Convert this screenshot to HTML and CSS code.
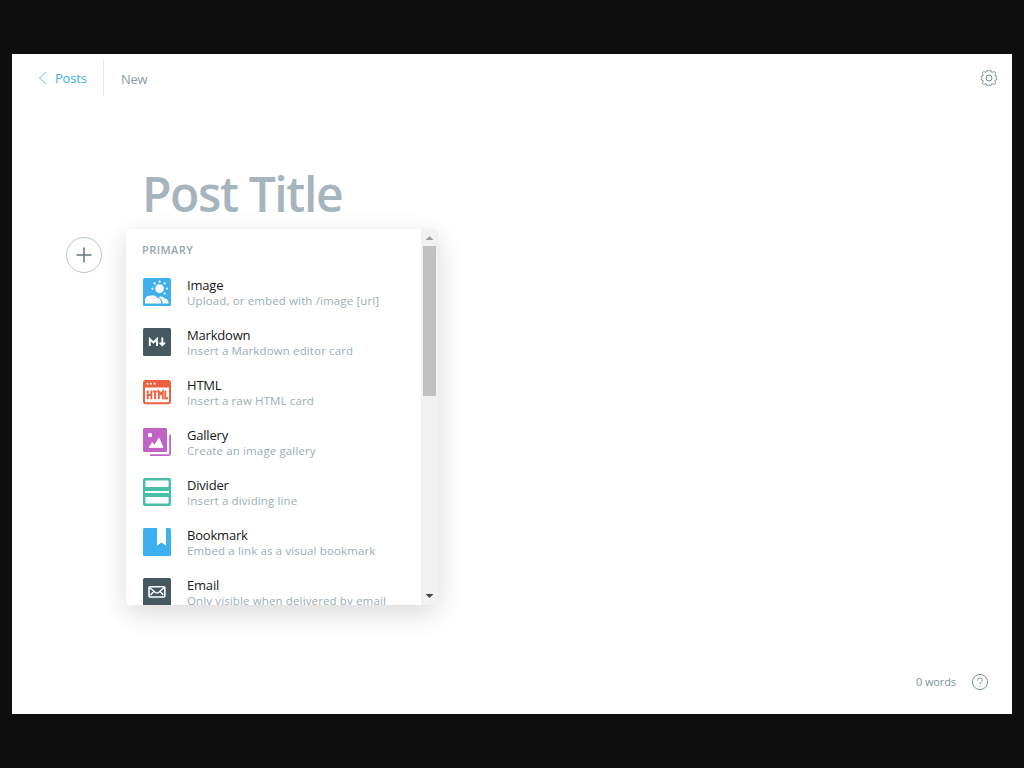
FILE: index.html
```html
<!DOCTYPE html>
<html lang="en">
<head>
<meta charset="utf-8">
<title>New post</title>
<link rel="stylesheet" href="styles.css">
</head>
<body>
<div class="app">
  <header class="topbar">
    <a class="back"><svg class="chevron" width="9" height="14" viewBox="0 0 9 14"><path d="M8 1L1.5 7L8 13"/></svg><span class="back-label">Posts</span></a>
    <span class="status">New</span>
    <svg class="gear" width="18" height="18" viewBox="0 0 18 18"><circle cx="9" cy="9" r="3"/><path d="M6.5 3.1C7.1 2.5 6.7 1.4 7.4 1.1C8.1 .8 8.3 2.3 9 2.3S9.9 .8 10.6 1.1C11.3 1.4 10.9 2.5 11.5 3.1C12.7 3.7 13.7 2.3 14.5 2.7L15.5 3.7C15.9 4.5 14.3 5.3 14.9 6.5C15.5 7.1 16.6 6.7 16.9 7.4C17.2 8.1 15.7 8.3 15.7 9S17.2 9.9 16.9 10.6C16.6 11.3 15.5 10.9 14.9 11.5C14.3 12.7 15.9 13.5 15.5 14.3L14.5 15.3C13.7 15.7 12.7 14.3 11.5 14.9C10.9 15.5 11.3 16.6 10.6 16.9C9.9 17.2 9.7 15.7 9 15.7S8.1 17.2 7.4 16.9C6.7 16.6 7.1 15.5 6.5 14.9C5.3 14.3 4.3 15.7 3.5 15.3L2.5 14.3C2.1 13.5 3.7 12.7 3.1 11.5C2.5 10.9 1.4 11.3 1.1 10.6C.8 9.9 2.3 9.7 2.3 9S.8 8.1 1.1 7.4C1.4 6.7 2.5 7.1 3.1 6.5C3.7 5.3 2.1 4.5 2.5 3.7L3.5 2.7C4.3 2.3 5.3 3.7 6.5 3.1Z"/></svg>
  </header>
  <h1 class="post-title">Post Title</h1>
  <main class="editor">
    <button class="plus" aria-label="Add a card"><svg width="16" height="16" viewBox="0 0 16 16"><path d="M8 .5V15.5M.5 8H15.5"/></svg></button>
    <section class="menu">
      <div class="cards">
        <h2 class="heading">Primary</h2>
        <div class="card">
          <svg class="icon" viewBox="0 0 28 28"><rect width="28" height="28" rx="1.5" fill="#3eb0ef"/><circle cx="16.6" cy="10.6" r="4.3" fill="#fff"/><g fill="#fff"><circle cx="16.6" cy="3.6" r="1.1"/><circle cx="11.6" cy="5.4" r="1.1"/><circle cx="21.7" cy="5.4" r="1.1"/><circle cx="9.4" cy="10.6" r="1.1"/><circle cx="24" cy="10.6" r="1.1"/><circle cx="21.7" cy="15.5" r="1.1"/><path d="M2 25.5V22C2 19.3 4.3 17.6 7 17.8C10 16.5 13 17.6 14.3 20C17 20 18.3 22.5 18.3 25.5ZM15.5 19.4C17.5 17.6 20.5 18.5 21.3 20.6C24.2 20.6 25.7 22.7 25.6 25.5H19.8C19.6 22.4 18.2 20.2 15.5 19.4Z"/></g></svg>
          <div class="copy"><span class="name">Image</span><span class="desc">Upload, or embed with /image [url]</span></div>
        </div>
        <div class="card">
          <svg class="icon" viewBox="0 0 28 28"><rect width="28" height="28" rx="1.5" fill="#465961"/><path d="M6.8 18V11L10.4 14.5L14 11V18M19.3 9.5V17.2M16.6 14.6L19.3 17.2L22 14.6" fill="none" stroke="#fff" stroke-width="1.9"/></svg>
          <div class="copy"><span class="name">Markdown</span><span class="desc">Insert a Markdown editor card</span></div>
        </div>
        <div class="card">
          <svg class="icon" viewBox="0 0 28 28"><rect y="2" width="28" height="24.2" rx="2.6" fill="#ed6040"/><path d="M2 9.5H26V23.3Q26 24.3 25 24.3H3Q2 24.3 2 23.3Z" fill="#fff"/><g fill="#fff"><circle cx="4.5" cy="5.8" r="1"/><circle cx="8" cy="5.8" r="1"/><circle cx="11.6" cy="5.8" r="1"/></g><path d="M4.7 12.6V21.2M8.4 12.6V21.2M4.7 17H8.4M9.9 13.5H14.3M12.1 13.5V21.2M15.8 21.2V13.6L17.8 16.2L19.8 13.6V21.2M22.3 12.6V20.3H25" fill="none" stroke="#ed6040" stroke-width="1.9"/></svg>
          <div class="copy"><span class="name">HTML</span><span class="desc">Insert a raw HTML card</span></div>
        </div>
        <div class="card">
          <svg class="icon" viewBox="0 0 28 28"><rect width="24" height="24" rx="1.5" fill="#c063c5"/><path d="M27.1 6.7V25.6Q27.1 27.1 25.6 27.1H7" fill="none" stroke="#c063c5" stroke-width="1.8"/><circle cx="7" cy="7" r="2.2" fill="#fff"/><path d="M6 19.5L9.3 14.5L11.8 17L16 10L20 19.5Z" fill="#fff" stroke="#fff" stroke-width=".8" stroke-linejoin="round"/></svg>
          <div class="copy"><span class="name">Gallery</span><span class="desc">Create an image gallery</span></div>
        </div>
        <div class="card">
          <svg class="icon" viewBox="0 0 28 28"><rect width="28" height="28" rx="1.7" fill="#48bfa8"/><g fill="#fff"><rect x="2.4" y="2.4" width="23.2" height="6.6" rx=".8"/><rect x="2" y="13" width="24" height="2"/><rect x="2.4" y="19" width="23.2" height="6.6" rx=".8"/></g></svg>
          <div class="copy"><span class="name">Divider</span><span class="desc">Insert a dividing line</span></div>
        </div>
        <div class="card">
          <svg class="icon" viewBox="0 0 28 28"><rect width="28" height="28" rx="1.5" fill="#3eb0ef"/><path d="M14 0H23V17.6L18.5 14.6L14 17.6Z" fill="#fff"/></svg>
          <div class="copy"><span class="name">Bookmark</span><span class="desc">Embed a link as a visual bookmark</span></div>
        </div>
        <div class="card">
          <svg class="icon" viewBox="0 0 28 28"><rect width="28" height="28" rx="1.5" fill="#465961"/><rect x="6" y="8.8" width="15.8" height="10.2" rx="1" fill="none" stroke="#fff" stroke-width="1.6"/><path d="M6.8 9.8L12.2 14.2Q14 15.6 15.8 14.2L21 9.8M7.5 17L10.8 13.6M20.4 17L17.1 13.6" fill="none" stroke="#fff" stroke-width="1.4"/></svg>
          <div class="copy"><span class="name">Email</span><span class="desc">Only visible when delivered by email</span></div>
        </div>
      </div>
      <div class="scroll">
        <svg class="arrow" width="17" height="17" viewBox="0 0 17 17"><path d="M4.5 11L8.5 7L12.5 11Z" fill="#9f9f9f"/></svg>
        <div class="thumb"></div>
        <svg class="arrow" width="17" height="17" viewBox="0 0 17 17"><path d="M4.5 6L8.5 10L12.5 6Z" fill="#484848"/></svg>
      </div>
    </section>
  </main>
  <footer class="bottom">
    <span class="words">0 words</span>
    <svg class="help" width="16" height="16" viewBox="0 0 16 16"><circle cx="8" cy="8" r="7.6"/><path d="M5.6 6.5Q5.6 4 8 4T10.4 6.1C10.4 7.9 8 7.8 8 10M8 11.5V12.5"/></svg>
  </footer>
</div>
</body>
</html>
```
FILE: styles.css
```css
* { box-sizing: border-box; }
body {
  margin: 0;
  height: 768px;
  padding: 54px 12px;
  background: #0e0e0e;
  font-family: "Open Sans", "Noto Sans", sans-serif;
  overflow: hidden;
}
.app {
  display: flex;
  flex-direction: column;
  height: 660px;
  background: #fff;
}
.topbar {
  display: flex;
  align-items: center;
  height: 48px;
  padding: 0 14px 0 26px;
}
.back {
  display: flex;
  align-items: center;
  gap: 8px;
  width: 66px;
  height: 36px;
  border-right: 1px solid #dfe9ee;
  color: #3eb0ef;
  font-size: 13px;
  letter-spacing: -.2px;
}
.chevron { fill: none; stroke: #3eb0ef; stroke-width: .8; }
.back-label { white-space: nowrap; }
.status {
  margin: 2px auto 0 17px;
  color: #8b9ba3;
  font-size: 13px;
  letter-spacing: -.3px;
}
.gear { fill: none; stroke: #738a94; stroke-width: 1; stroke-linejoin: round; }
.post-title {
  margin: 60px 0 0 130px;
  height: 67px;
  color: #a6b5bd;
  font-size: 48px;
  font-weight: 600;
  line-height: 64px;
  letter-spacing: -1.4px;
}
.editor { display: flex; gap: 24px; padding-left: 54px; }
.plus {
  display: grid;
  place-items: center;
  width: 36px;
  height: 36px;
  margin-top: 8px;
  padding: 0;
  border: 1px solid #b5c5cd;
  border-radius: 50%;
  background: #fff;
}
.plus svg { fill: none; stroke: #5f747d; stroke-width: 1.5; }
.menu {
  display: flex;
  width: 312px;
  height: 376px;
  border-radius: 4px;
  background: #fff;
  overflow: hidden;
  box-shadow: 0 0 1px rgba(0, 0, 0, .04), 0 8px 28px rgba(0, 0, 0, .15);
}
.cards { flex: 1; padding: 12px 0 0 16px; overflow: hidden; }
.heading {
  margin: 0 0 12px;
  color: #96a6ae;
  font-size: 11px;
  font-weight: 600;
  line-height: 18px;
  letter-spacing: .45px;
  text-transform: uppercase;
}
.card { display: flex; gap: 16px; height: 50px; padding: 7px 0 0 1px; }
.icon { flex: none; width: 28px; height: 28px; }
.copy { display: flex; flex-direction: column; margin-top: -1px; white-space: nowrap; }
.name { color: #15171a; font-size: 13px; line-height: 16px; letter-spacing: -.2px; }
.desc { color: #9baeb8; font-size: 11.5px; line-height: 16px; letter-spacing: .13px; }
.scroll { display: flex; flex-direction: column; width: 17px; background: #f1f1f1; }
.arrow { display: block; }
.thumb { width: 13px; height: 150px; margin: 0 2px auto; background: #c1c1c1; }
.bottom {
  display: flex;
  align-items: center;
  justify-content: flex-end;
  gap: 16px;
  margin-top: auto;
  padding: 0 24px 24px 0;
}
.words { color: #7d939c; font-size: 11px; line-height: 16px; letter-spacing: -.1px; }
.help { fill: none; stroke: #7d939c; stroke-width: 1; }
```
